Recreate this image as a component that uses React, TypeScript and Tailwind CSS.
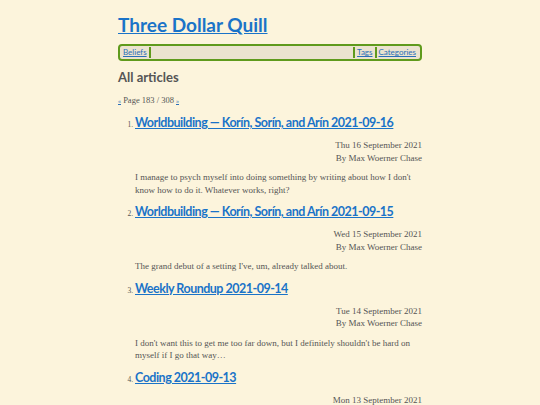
const articles = [
  {
    title: 'Worldbuilding — Korín, Sorín, and Arín 2021-09-16',
    date: 'Thu 16 September 2021',
    summary: "I manage to psych myself into doing something by writing about how I don't know how to do it. Whatever works, right?",
  },
  {
    title: 'Worldbuilding — Korín, Sorín, and Arín 2021-09-15',
    date: 'Wed 15 September 2021',
    summary: "The grand debut of a setting I've, um, already talked about.",
  },
  {
    title: 'Weekly Roundup 2021-09-14',
    date: 'Tue 14 September 2021',
    summary: "I don't want this to get me too far down, but I definitely shouldn't be hard on myself if I go that way…",
  },
  {
    title: 'Coding 2021-09-13',
    date: 'Mon 13 September 2021',
    summary: 'A little bit of progress, and a lot of thinking.',
  },
];

const heading = { fontFamily: 'Lato, "Noto Sans", sans-serif' };
const body = { fontFamily: '"Liberation Serif", "DejaVu Serif", serif' };

export default function App() {
  return (
    <div className="min-h-[405px] bg-[#fcf4dc] text-[#555]" style={body}>
      <div className="mx-auto w-[304px] pt-[12px]">
        <h1 className="text-[19px] font-bold leading-[26px]" style={heading}>
          <a href="#" className="text-[#1a73c8] underline">Three Dollar Quill</a>
        </h1>

        {/* nav */}
        <nav
          className="mt-[6px] flex items-center rounded-[4px] border-2 border-[#5f9a1c] bg-[#ebe3cf] px-[2px] py-[1px] text-[8px] leading-[11px]"
          style={heading}
        >
          <a href="#" className="px-[1px] text-[#2a6fb8] underline">Beliefs</a>
          <span className="flex-1 border-x-2 border-[#5f9a1c] self-stretch ml-[1px]" />
          <a href="#" className="px-[2px] text-[#2a6fb8] underline">Tags</a>
          <span className="w-[2px] self-stretch bg-[#5f9a1c]" />
          <a href="#" className="px-[2px] text-[#2a6fb8] underline">Categories</a>
        </nav>

        <h2 className="mt-[7px] text-[13px] font-bold leading-[18px] text-[#555]" style={heading}>All articles</h2>

        <p className="mt-[9px] text-[8.5px] leading-[10px]">
          <a href="#" className="text-[#2a6fb8] underline text-[6px]">«</a> Page 183 / 308{' '}
          <a href="#" className="text-[#2a6fb8] underline text-[6px]">»</a>
        </p>

        <ol className="mt-[8px] pl-[17px] list-decimal marker:text-[7.5px] marker:text-[#555]">
          {articles.map((a, i) => (
            <li key={i} className="mb-[7px]">
              <h3 className="text-[12.5px] font-bold leading-[18px] tracking-[-0.5px] whitespace-nowrap" style={heading}>
                <a href="#" className="text-[#1a73c8] underline">{a.title}</a>
              </h3>
              <div className="mt-[7px] text-right text-[9px] leading-[12.5px]">
                <div>{a.date}</div>
                <div>By Max Woerner Chase</div>
              </div>
              <p className="mt-[7px] text-[9px] leading-[12.5px]">{a.summary}</p>
            </li>
          ))}
        </ol>
      </div>
    </div>
  );
}
